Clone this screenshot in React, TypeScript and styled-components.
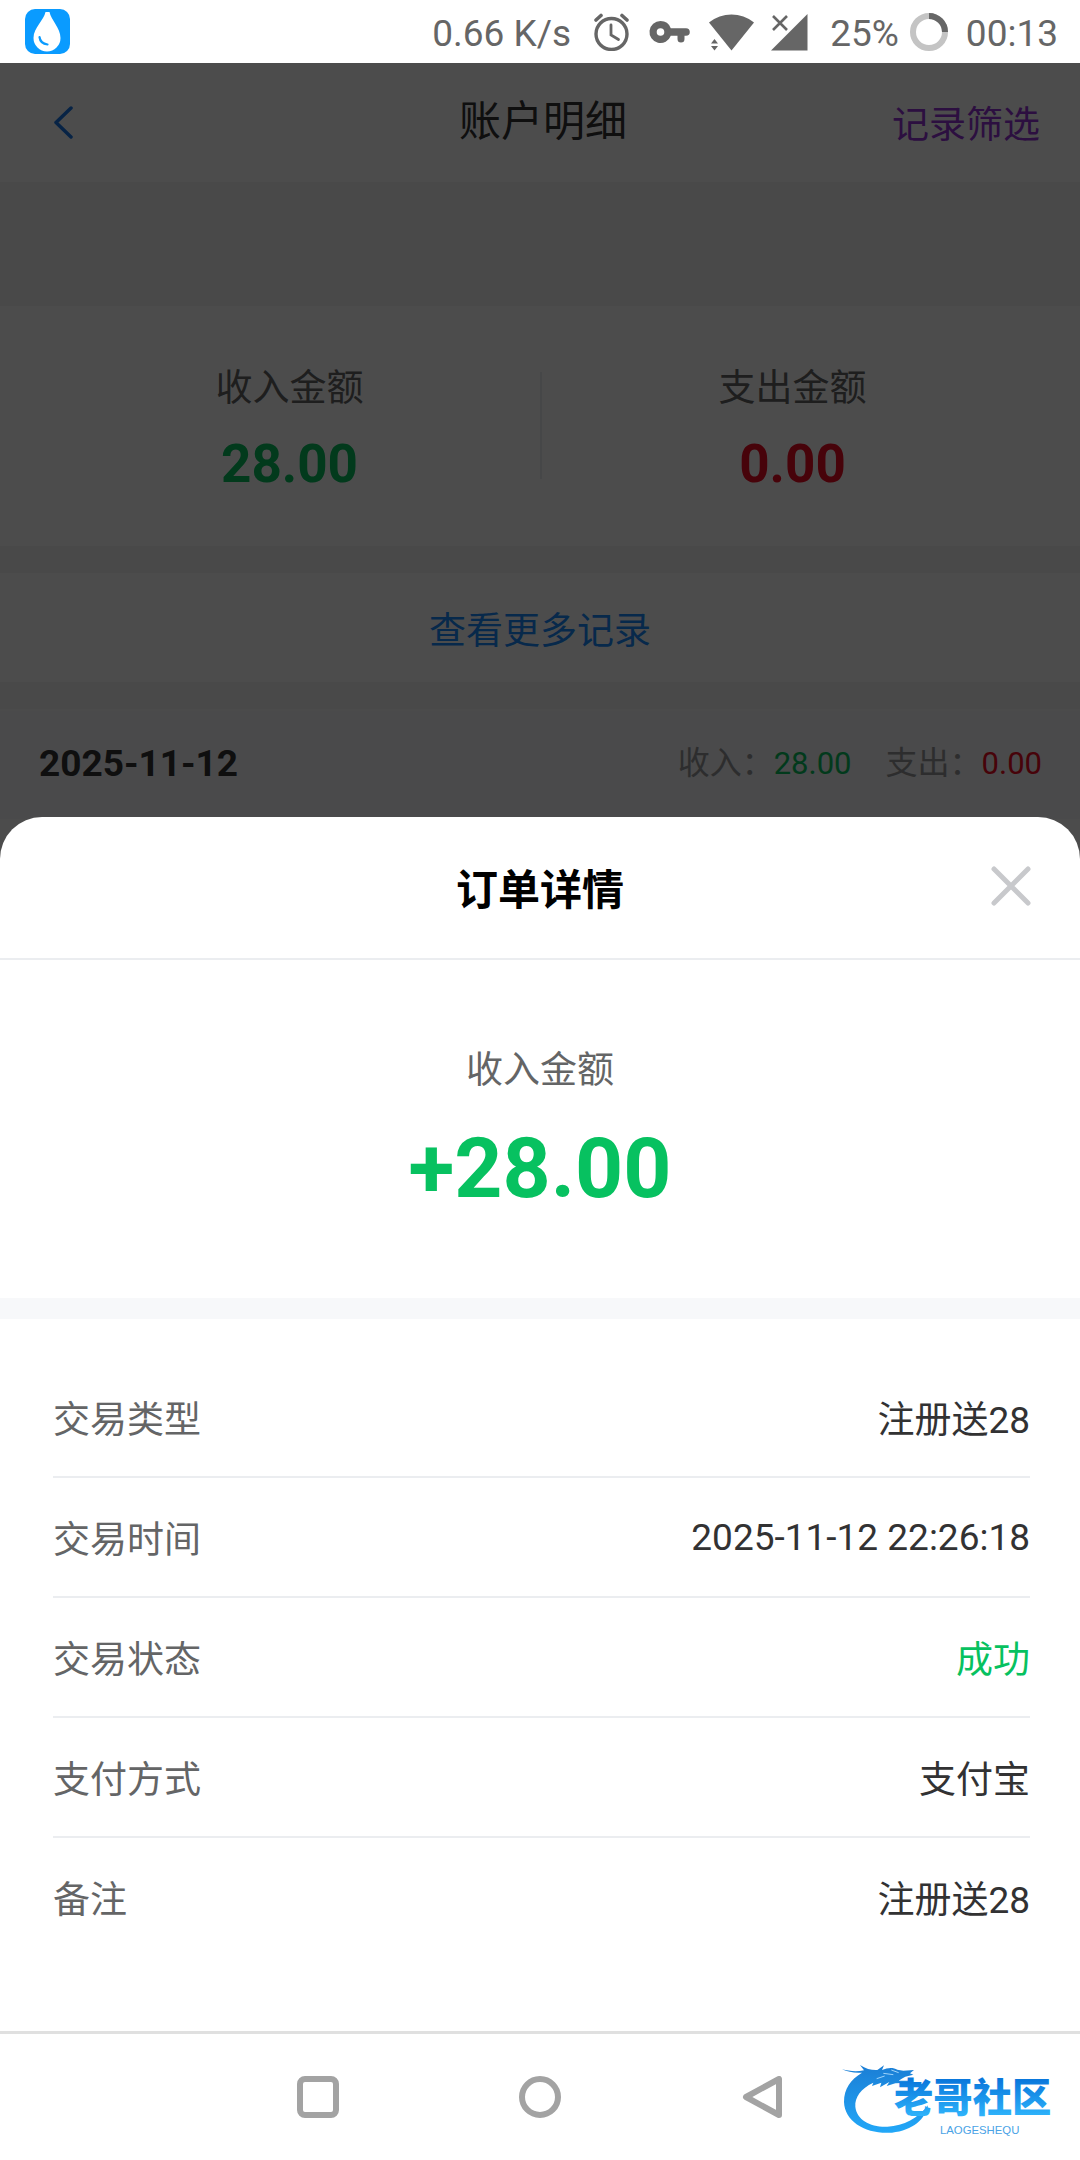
import React from "react";
import styled, { createGlobalStyle } from "styled-components";

const GlobalStyle = createGlobalStyle`
  *, *::before, *::after { box-sizing: border-box; }
  body {
    margin: 0;
    background: #fff;
    color: #323233;
    font-family: Roboto, "Noto Sans CJK SC", sans-serif;
    font-size: 37px;
    line-height: normal;
  }
  button {
    margin: 0;
    padding: 0;
    border: 0;
    background: none;
    color: inherit;
    font: inherit;
    cursor: pointer;
  }
  h1, h2, p, dl, dd { margin: 0; }
  svg { display: block; flex: none; }
`;

type Tone = "income" | "expense" | "plain";

const tones: Record<Tone, string> = {
  income: "#07c160",
  expense: "#ee0a24",
  plain: "#323233",
};

const Screen = styled.div`
  display: flex;
  flex-direction: column;
  min-height: 100vh;
`;

/* ---- system status bar ---- */

const StatusBar = styled.header`
  display: flex;
  align-items: center;
  justify-content: space-between;
  height: 63px;
  padding: 0 22px 0 25px;
  color: #666;
  background: #fff;
`;

const StatusGroup = styled.div<{ $gap: number }>`
  display: flex;
  align-items: center;
  gap: ${(p) => p.$gap}px;
`;

const StatusText = styled.span`
  padding-top: 3px;
`;

/* ---- account page ---- */

const Stage = styled.div`
  position: relative;
  display: flex;
  flex: 1;
  flex-direction: column;
`;

const Page = styled.main`
  display: flex;
  flex: 1;
  flex-direction: column;
  background: #f5f5f5;
`;

const TitleBar = styled.div`
  display: grid;
  grid-template-columns: 1fr auto 1fr;
  align-items: center;
  height: 119px;
  padding: 0 40px 2px 46px;
  background: #fff;
`;

const PageTitle = styled.h1`
  font-size: 42px;
  font-weight: 400;
  line-height: 56px;
`;

const BackButton = styled.button`
  justify-self: start;
`;

const FilterButton = styled.button`
  justify-self: end;
  color: #9333d6;
`;

const Summary = styled.section`
  display: grid;
  grid-template-columns: 1fr 2px 1fr;
  margin-top: 124px;
  padding: 52px 37px 53px 39px;
  height: 240px;
  background: #fff;
`;

const SummaryItem = styled.div`
  display: flex;
  flex-direction: column;
  align-items: center;
  gap: 15px;
  color: #646566;
`;

const SummaryDivider = styled.span`
  height: 107px;
  margin-top: 14px;
  background: #ebedf0;
`;

const SummaryValue = styled.strong<{ $tone: Tone }>`
  color: ${(p) => tones[p.$tone]};
  font-size: 53px;
  line-height: 74px;
`;

const MoreButton = styled.button`
  height: 109px;
  margin: 27px 0;
  background: #fff;
  color: #1989fa;
`;

const DayRow = styled.div`
  display: flex;
  align-items: center;
  justify-content: space-between;
  height: 110px;
  padding: 0 38px 4px 39px;
  background: #f7f8fa;
  border-top: 2px solid #fafafa;
`;

const DayTotals = styled.div`
  display: flex;
  gap: 34px;
  color: #969799;
  font-size: 32px;
  line-height: 50px;
`;

const DayAmount = styled.span<{ $tone: Tone }>`
  color: ${(p) => tones[p.$tone]};
  font-size: 31px;
`;

const DayList = styled.div`
  flex: 1;
  background: #fff;
`;

/* ---- order sheet ---- */

const Overlay = styled.div`
  position: absolute;
  inset: 0;
  display: flex;
  flex-direction: column;
  justify-content: flex-end;
  background: rgba(0, 0, 0, 0.7);
`;

const Sheet = styled.section`
  border-radius: 42px 42px 0 0;
  background: #fff;
`;

const SheetHeader = styled.div`
  display: grid;
  grid-template-columns: 1fr auto 1fr;
  align-items: center;
  height: 143px;
  padding: 0 48px 3px;
  border-bottom: 2px solid #ebedf0;
`;

const SheetTitle = styled.h2`
  grid-column: 2;
  color: #000;
  font-size: 42px;
  font-weight: 700;
`;

const CloseButton = styled.button`
  justify-self: end;
`;

const AmountBlock = styled.div`
  display: flex;
  flex-direction: column;
  align-items: center;
  gap: 18px;
  height: 359px;
  padding-top: 80px;
  border-bottom: 21px solid #f7f8fa;
  color: #646566;
`;

const Amount = styled.strong`
  color: #07c160;
  font-size: 84px;
  line-height: 114px;
`;

const Details = styled.dl`
  padding: 39px 50px 73px 53px;
`;

const DetailRow = styled.div`
  display: flex;
  align-items: center;
  justify-content: space-between;
  height: 120px;
  border-bottom: 2px solid #ebedf0;

  &:last-child { border-bottom-color: transparent; }
`;

const DetailLabel = styled.dt`
  color: #646566;
`;

const DetailValue = styled.dd<{ $tone: Tone }>`
  color: ${(p) => tones[p.$tone]};
`;

/* ---- system navigation ---- */

const NavBar = styled.nav`
  position: relative;
  display: flex;
  align-items: center;
  justify-content: center;
  gap: 180px;
  height: 129px;
  border-top: 3px solid #e0e0e0;
  background: #fff;
`;

const NavButton = styled.button`
  display: block;
`;

const Watermark = styled.div`
  position: absolute;
  top: 22px;
  right: 10px;
`;

const DropIcon = () => (
  <svg width="45" height="45" viewBox="0 0 45 45" aria-hidden="true">
    <rect width="45" height="45" rx="10" fill="#0a9bff" />
    <path d="M20.500 3h4C26 11 35.500 19 35.500 29a13.500 13.500 0 0 1-27 0C8.500 19 19 11 20.500 3z" fill="#fff" />
    <path d="M14.500 28c.5 4 3.500 7 8 7.500" fill="none" stroke="#0a9bff" strokeWidth="2.200" strokeLinecap="round" />
  </svg>
);

const AlarmIcon = () => (
  <svg width="38" height="38" viewBox="0 0 38 38" fill="none" stroke="#666" strokeLinecap="round" aria-hidden="true">
    <circle cx="18.500" cy="21" r="15.500" strokeWidth="3.400" />
    <path d="M3 7l5-4.500M34 7l-5-4.500" strokeWidth="3.600" />
    <path d="M18 12v10l7.500 4.500" strokeWidth="2.800" />
  </svg>
);

const KeyIcon = () => (
  <svg width="46" height="38" viewBox="0 0 46 38" fill="#666" aria-hidden="true">
    <path
      fillRule="evenodd"
      d="M13.500 8a11 11 0 0 1 10.300 7.200H39a3.800 3.800 0 0 1 0 7.600h-1.500V26a3.500 3.500 0 0 1-7 0v-3.200h-6.700A11 11 0 1 1 13.500 8zm0 7.200a3.800 3.800 0 1 0 0 7.600 3.800 3.800 0 0 0 0-7.600z"
    />
  </svg>
);

const WifiIcon = () => (
  <svg width="46" height="38" viewBox="0 0 46 38" fill="#666" aria-hidden="true">
    <path d="M0 9.500C13-1.200 32-1.200 45 9.500L22.500 37.500z" />
    <path d="M2 30.500l3.500-4.500 3.500 4.500zM2 33h7l-3.500 4.500z" />
  </svg>
);

const SignalIcon = () => (
  <svg width="38" height="38" viewBox="0 0 38 38" aria-hidden="true">
    <path d="M0 37.500L36.500 1v36.500z" fill="#666" />
    <path d="M2 3l14 14M16 3L2 17" stroke="#666" strokeWidth="2.600" />
  </svg>
);

const BatteryIcon = () => (
  <svg width="38" height="38" viewBox="0 0 38 38" fill="none" strokeWidth="6" aria-hidden="true">
    <circle cx="19" cy="19" r="16" stroke="#c4c4c4" />
    <path d="M19 3a16 16 0 0 1 16 16" stroke="#666" />
  </svg>
);

const BackIcon = () => (
  <svg width="34" height="34" viewBox="0 0 34 34" fill="none" stroke="#1977e8" strokeWidth="3.500" strokeLinecap="round" strokeLinejoin="round">
    <path d="M25 3L10 17.500 25 32" />
  </svg>
);

const CloseIcon = () => (
  <svg width="42" height="42" viewBox="0 0 42 42" stroke="#c8c9cc" strokeWidth="5" strokeLinecap="round">
    <path d="M4 4l34 34M38 4l-34 34" />
  </svg>
);

const LogoMark = () => (
  <svg width="230" height="80" viewBox="60 108 690 240" role="img" aria-label="老哥社区">
    <defs>
      <linearGradient id="ink" gradientUnits="userSpaceOnUse" x1="0" y1="180" x2="0" y2="290">
        <stop offset="0" stopColor="#0a78dc" />
        <stop offset="1" stopColor="#2fb4fb" />
      </linearGradient>
      <linearGradient id="body" gradientUnits="userSpaceOnUse" x1="0" y1="140" x2="0" y2="340">
        <stop offset="0" stopColor="#1b7fd6" />
        <stop offset="1" stopColor="#22a8f8" />
      </linearGradient>
    </defs>
    <path
      fill="url(#body)"
      d="M66 148c20 5 42 8 66 3l-12-16c18 12 36 16 52 15l20-14-6 14c18-8 34-8 46-1l18 3 32-2-12 10 10 4-24 6c-8 4-14 8-20 12h40l-12 6-38 2-26 8 8-12-28 16 4-14-28 10 4-10c-38 18-56 44-54 72 4 40 46 62 96 60 50-2 92-26 122-64-6 40-46 76-108 82C140 344 74 306 72 246c0-40 20-68 54-88-22 2-42-2-60-10z"
    />
    <path d="M190 160l30 4M214 150l22 8M170 176l24-8" stroke="#9fd4fa" strokeWidth="3" fill="none" />
    <text x="222" y="275" fill="url(#ink)" fontFamily="'Noto Sans CJK SC', sans-serif" fontWeight="900" fontSize="118">
      老哥社区
    </text>
    <text x="360" y="341" fill="#4aa3e6" fontFamily="'Liberation Sans', sans-serif" fontSize="34">
      LAOGESHEQU
    </text>
  </svg>
);

const details: { label: string; value: string; tone: Tone }[] = [
  { label: "交易类型", value: "注册送28", tone: "plain" },
  { label: "交易时间", value: "2025-11-12 22:26:18", tone: "plain" },
  { label: "交易状态", value: "成功", tone: "income" },
  { label: "支付方式", value: "支付宝", tone: "plain" },
  { label: "备注", value: "注册送28", tone: "plain" },
];

export default function App() {
  return (
    <Screen>
      <GlobalStyle />
      <StatusBar>
        <DropIcon />
        <StatusGroup $gap={21}>
          <StatusGroup $gap={22}>
            <StatusText>0.66 K/s</StatusText>
            <StatusGroup $gap={16}>
              <AlarmIcon />
              <KeyIcon />
              <WifiIcon />
              <SignalIcon />
            </StatusGroup>
          </StatusGroup>
          <StatusGroup $gap={18}>
            <StatusGroup $gap={11}>
              <StatusText>25%</StatusText>
              <BatteryIcon />
            </StatusGroup>
            <StatusText>00:13</StatusText>
          </StatusGroup>
        </StatusGroup>
      </StatusBar>

      <Stage>
        <Page>
          <TitleBar>
            <BackButton type="button" aria-label="返回">
              <BackIcon />
            </BackButton>
            <PageTitle>账户明细</PageTitle>
            <FilterButton type="button">记录筛选</FilterButton>
          </TitleBar>
          <Summary>
            <SummaryItem>
              <span>收入金额</span>
              <SummaryValue $tone="income">28.00</SummaryValue>
            </SummaryItem>
            <SummaryDivider />
            <SummaryItem>
              <span>支出金额</span>
              <SummaryValue $tone="expense">0.00</SummaryValue>
            </SummaryItem>
          </Summary>
          <MoreButton type="button">查看更多记录</MoreButton>
          <DayRow>
            <strong>2025-11-12</strong>
            <DayTotals>
              <span>
                收入：<DayAmount $tone="income">28.00</DayAmount>
              </span>
              <span>
                支出：<DayAmount $tone="expense">0.00</DayAmount>
              </span>
            </DayTotals>
          </DayRow>
          <DayList />
        </Page>

        <Overlay>
          <Sheet role="dialog" aria-labelledby="sheet-title">
            <SheetHeader>
              <SheetTitle id="sheet-title">订单详情</SheetTitle>
              <CloseButton type="button" aria-label="关闭">
                <CloseIcon />
              </CloseButton>
            </SheetHeader>
            <AmountBlock>
              <p>收入金额</p>
              <Amount>+28.00</Amount>
            </AmountBlock>
            <Details>
              {details.map((d) => (
                <DetailRow key={d.label}>
                  <DetailLabel>{d.label}</DetailLabel>
                  <DetailValue $tone={d.tone}>{d.value}</DetailValue>
                </DetailRow>
              ))}
            </Details>
          </Sheet>
        </Overlay>
      </Stage>

      <NavBar>
        <NavButton type="button" aria-label="最近任务">
          <svg width="42" height="42" viewBox="0 0 42 42" fill="none" stroke="#a3a3a3" strokeWidth="6">
            <rect x="3" y="3" width="36" height="36" rx="5" />
          </svg>
        </NavButton>
        <NavButton type="button" aria-label="主屏幕">
          <svg width="42" height="42" viewBox="0 0 42 42" fill="none" stroke="#a3a3a3" strokeWidth="6">
            <circle cx="21" cy="21" r="18" />
          </svg>
        </NavButton>
        <NavButton type="button" aria-label="返回上一页">
          <svg width="42" height="42" viewBox="0 0 42 42" fill="none" stroke="#a3a3a3" strokeWidth="6" strokeLinejoin="round">
            <path d="M5 21L38 3v36z" />
          </svg>
        </NavButton>
        <Watermark>
          <LogoMark />
        </Watermark>
      </NavBar>
    </Screen>
  );
}
